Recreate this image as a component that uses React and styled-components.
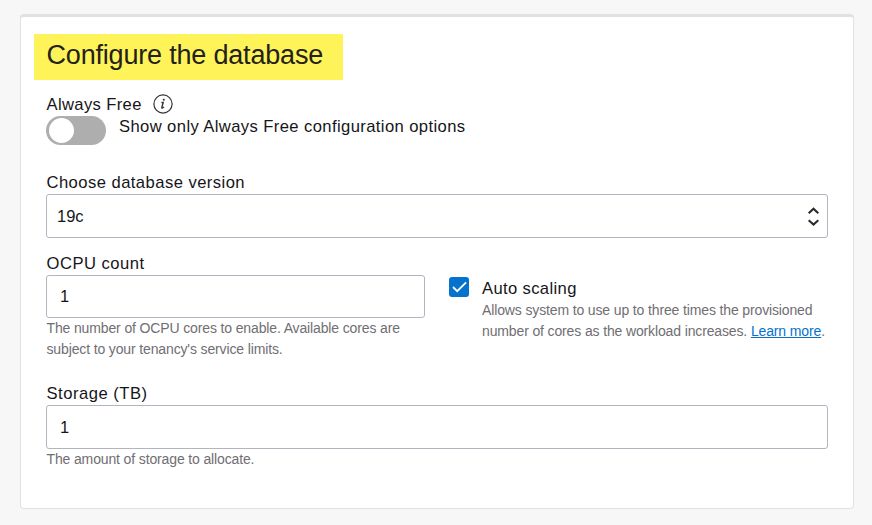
import React from 'react';
import styled, { createGlobalStyle } from 'styled-components';

const Global = createGlobalStyle`
  * { box-sizing: border-box; }
  body { margin: 0; background: #f7f7f7; font-family: "Liberation Sans", Arial, sans-serif; color: #161519; }
`;
const Page = styled.main`
  height: 525px;
  padding: 14px 18px 0 20px;
  overflow: hidden;
`;
const Card = styled.section`
  height: 495px;
  padding: 17px 25px 0;
  background: #fff;
  border: 1px solid #e1e1e5;
  border-top-width: 3px;
  border-radius: 4px;
`;
const Title = styled.h1`
  width: 309px;
  height: 46px;
  margin: 0 0 0 -12px;
  padding-left: 12.5px;
  background: #fff35a;
  color: #23221a;
  font-size: 27px;
  font-weight: 400;
  letter-spacing: -0.19px;
  line-height: 42px;
  white-space: nowrap;
`;
const Label = styled.label`
  display: flex;
  align-items: center;
  height: 20px;
  padding-top: 1px;
  padding-left: ${p => p.$indent || 0}px;
  gap: 11px;
  font-size: 16.6px;
  line-height: 19px;
  letter-spacing: ${p => p.$spacing || 0.36}px;
  white-space: nowrap;
`;
const FreeSection = styled.div`
  height: 92px;
  padding-top: 14px;
`;
const InfoIcon = styled.svg`
  flex: none;
  margin-top: -2px;
`;
const ToggleRow = styled.div`
  display: flex;
  gap: 13px;
  padding-top: 2px;
`;
const Toggle = styled.span`
  width: 60px;
  height: 29px;
  padding: 2px 3px;
  border-radius: 15px;
  background: #aeaeae;
`;
const Knob = styled.span`
  display: block;
  width: 25px;
  height: 25px;
  border-radius: 50%;
  background: #fff;
`;
const Field = styled.div`
  height: ${p => p.$height}px;
`;
const Input = styled.div`
  display: flex;
  align-items: center;
  justify-content: space-between;
  height: ${p => p.$height || 44}px;
  margin-top: 2px;
  padding: ${p => p.$drop ?? 1}px 7px 0 ${p => p.$inset || 13}px;
  border: 1px solid #b1b5bf;
  border-radius: 3px;
  font-size: 16.5px;
`;
const Columns = styled.div`
  display: grid;
  grid-template-columns: 379px 380px;
  column-gap: 24px;
  height: 130px;
`;
const Help = styled.p`
  margin: 0;
  padding-left: ${p => p.$indent || 0}px;
  color: #706e73;
  font-size: 14px;
  letter-spacing: -0.135px;
  line-height: 21px;
  white-space: nowrap;
`;
const Scaling = styled.div`
  display: grid;
  grid-template-columns: 20px 1fr;
  column-gap: 13px;
  padding-top: 24px;
`;
const ScalingText = styled.div`
  padding-top: 1px;
  ${Help} { padding-top: 2px; }
`;
const CheckBox = styled.span`
  width: 20px;
  height: 20px;
  border-radius: 3px;
  background: #0572ce;
  svg { display: block; }
`;
const Link = styled.a`
  color: #0572ce;
  text-decoration: underline;
  text-underline-offset: 1px;
`;

export default function App() {
  return (
    <>
      <Global />
      <Page>
        <Card>
          <Title>Configure the database</Title>
          <FreeSection>
            <Label $indent={0.5}>
              Always Free
              <InfoIcon width="20" height="20" viewBox="0 0 20 20" fill="none" stroke="#333">
                <circle cx="10" cy="10" r="9.1" strokeWidth="1.2" />
                <path d="M8.4 8.5h1.8L8.9 13.1q-.3 1.1.5.9.7-.2 1.5-1.1" strokeWidth="1.4" />
                <circle cx="10.8" cy="5.8" r="1.05" fill="#333" stroke="none" />
              </InfoIcon>
            </Label>
            <ToggleRow>
              <Toggle><Knob /></Toggle>
              <Label $spacing={0.4}>Show only Always Free configuration options</Label>
            </ToggleRow>
          </FreeSection>
          <Field $height={81}>
            <Label $indent={0.5} $spacing={0.45}>Choose database version</Label>
            <Input $inset={10}>
              19c
              <svg width="13" height="20" viewBox="0 0 13 20" fill="none" stroke="#2b2b2b" strokeWidth="2.1">
                <path d="M1.7 6.2l4.8-4.5 4.8 4.5M1.7 13.3l4.8 4.3 4.8-4.3" />
              </svg>
            </Input>
          </Field>
          <Columns>
            <Field $height={130}>
              <Label $indent={0.5} $spacing={0.5}>OCPU count</Label>
              <Input $height={43} $drop={0}>1</Input>
              <Help $indent={0.5}>The number of OCPU cores to enable. Available cores are<br />subject to your tenancy's service limits.</Help>
            </Field>
            <Scaling>
              <CheckBox>
                <svg width="20" height="20" viewBox="0 0 20 20" fill="none" stroke="#fff" strokeWidth="1.8"><path d="M4 10l4.2 4.2 8.9-8.9" /></svg>
              </CheckBox>
              <ScalingText>
                <Label>Auto scaling</Label>
                <Help>Allows system to use up to three times the provisioned<br />number of cores as the workload increases. <Link>Learn more</Link>.</Help>
              </ScalingText>
            </Scaling>
          </Columns>
          <Field $height={86}>
            <Label $indent={0.5} $spacing={0.5}>Storage (TB)</Label>
            <Input>1</Input>
            <Help $indent={0.5}>The amount of storage to allocate.</Help>
          </Field>
        </Card>
      </Page>
    </>
  );
}
